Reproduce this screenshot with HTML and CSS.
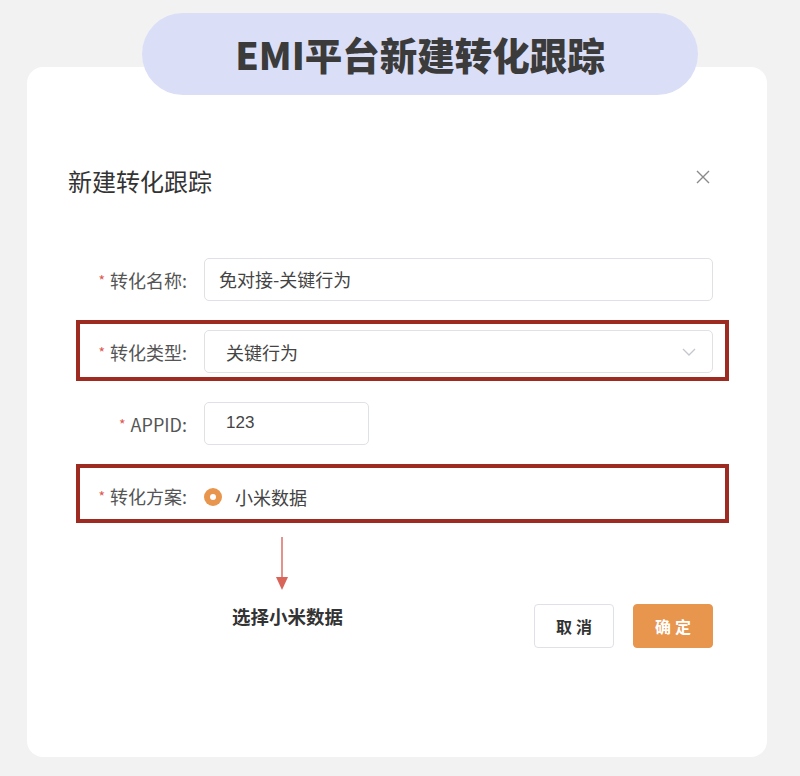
FILE: index.html
```html
<!DOCTYPE html>
<html>
  <head>
    <meta charset="UTF-8" />
    <meta name="viewport" content="width=device-width, initial-scale=1.0" />
    <title>EMI平台新建转化跟踪</title>
    <link rel="stylesheet" href="styles.css">
  </head>
  <body>
    <div class="page">
      <div class="banner">EMI平台新建转化跟踪</div>
      <div class="card">
        <div class="head">
          <h2>新建转化跟踪</h2>
          <svg class="close" width="14" height="14" viewBox="0 0 14 14">
            <path d="M1 1 L13 13 M13 1 L1 13" stroke="#8a8a8a" stroke-width="1.4" fill="none" />
          </svg>
        </div>
        <div class="form">
          <div class="row">
            <label class="label"><i>*</i>转化名称:</label>
            <div class="input">免对接-关键行为</div>
          </div>
          <div class="row mark">
            <label class="label"><i>*</i>转化类型:</label>
            <div class="input select">
              <span>关键行为</span>
              <svg width="14" height="8" viewBox="0 0 14 8">
                <path d="M1 1 L7 7 L13 1" stroke="#c4c7cf" stroke-width="1.3" fill="none" />
              </svg>
            </div>
          </div>
          <div class="row">
            <label class="label"><i>*</i>APPID:</label>
            <div class="input short">123</div>
          </div>
          <div class="row mark last">
            <label class="label"><i>*</i>转化方案:</label>
            <div class="radio"><span class="dot"></span>小米数据</div>
          </div>
        </div>
        <div class="foot">
          <div class="note">
            <svg width="12" height="54" viewBox="0 0 12 54">
              <path d="M6 0 L6 42" stroke="#d9645a" stroke-width="1.4" />
              <path d="M0 40 L12 40 L6 53 Z" fill="#d9645a" />
            </svg>
            <p>选择小米数据</p>
          </div>
          <div class="btns">
            <button class="btn">取消</button>
            <button class="btn primary">确定</button>
          </div>
        </div>
      </div>
    </div>
  </body>
</html>
```

FILE: styles.css
```css
* {
  box-sizing: border-box;
  margin: 0;
  padding: 0;
}

body {
  background-color: #f2f2f2;
  font-family: "Noto Sans CJK SC", "Liberation Sans", sans-serif;
  color: #333;
}

.page {
  width: 800px;
  height: 776px;
  padding-top: 13px;
}

.banner {
  position: relative;
  z-index: 1;
  width: 556px;
  height: 82px;
  margin-left: 142px;
  border-radius: 41px;
  background-color: #dadff7;
  color: #3b3b3b;
  font-size: 37.5px;
  font-weight: 900;
  line-height: 82px;
  text-align: center;
}

.card {
  width: 740px;
  height: 690px;
  margin: -28px 0 0 27px;
  padding: 100px 54px 0 41px;
  background-color: #fff;
  border-radius: 16px;
}

.head {
  display: flex;
  justify-content: space-between;
  align-items: center;
  height: 28px;
}

.head h2 {
  font-size: 24px;
  font-weight: 400;
  line-height: 28px;
  color: #333;
}

.close {
  margin: -8px 3px 0 0;
}

.form {
  margin-top: 63px;
}

.row {
  position: relative;
  display: flex;
  align-items: center;
  height: 43px;
  margin-bottom: 29px;
}

.row.last {
  margin-bottom: 0;
}

/* 红框标注 */
.mark::after {
  content: "";
  position: absolute;
  top: -10px;
  bottom: -8px;
  left: 8px;
  right: -16px;
  border: 4px solid #9e2b22;
}

.row.last::after {
  top: -10px;
  bottom: -6px;
}

.label {
  width: 136px;
  padding-right: 17px;
  text-align: right;
  font-size: 18px;
  color: #555;
}

.label i {
  font-style: normal;
  color: #e0574f;
  font-size: 14px;
  margin-right: 5px;
  vertical-align: 2px;
}

.input {
  flex: 1;
  height: 43px;
  padding: 0 14px;
  border: 1.5px solid #dfe1e7;
  border-radius: 5px;
  font-size: 18px;
  line-height: 40px;
  color: #444;
}

.select {
  display: flex;
  justify-content: space-between;
  align-items: center;
  padding: 0 16px 0 21px;
}

.short {
  flex: none;
  width: 165px;
  padding-left: 21px;
  font-family: "Liberation Sans", sans-serif;
  font-size: 17px;
}

.radio {
  display: flex;
  align-items: center;
  margin-top: 2px;
  font-size: 18px;
  color: #444;
}

.dot {
  width: 18px;
  height: 18px;
  margin-right: 13px;
  border-radius: 50%;
  background-color: #e8954e;
  display: flex;
  align-items: center;
  justify-content: center;
}

.dot::after {
  content: "";
  width: 6px;
  height: 6px;
  border-radius: 50%;
  background-color: #fff;
}

.foot {
  display: flex;
  justify-content: space-between;
  align-items: flex-start;
  margin-top: 20px;
}

.note {
  margin-left: 164px;
}

.note svg {
  display: block;
  margin-left: 44px;
}

.note p {
  margin-top: 13px;
  font-size: 18.5px;
  font-weight: 700;
  line-height: 24px;
  color: #333;
}

.btns {
  display: flex;
  gap: 19px;
  margin-top: 67px;
}

.btn {
  width: 80px;
  height: 44px;
  border: 1.5px solid #dfe1e7;
  border-radius: 4px;
  background-color: #fff;
  font-family: "Noto Sans CJK SC", sans-serif;
  font-size: 16px;
  font-weight: 700;
  letter-spacing: 4px;
  text-indent: 4px;
  color: #333;
}

.btn.primary {
  border-color: #e8954e;
  background-color: #e8954e;
  color: #fff;
}
```
